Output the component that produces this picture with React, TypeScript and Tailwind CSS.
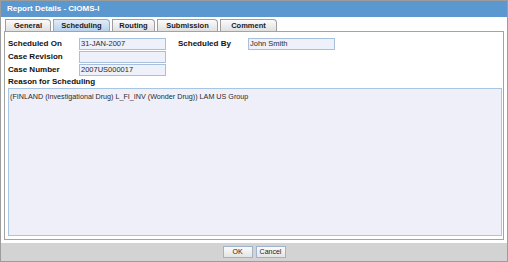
import React from 'react'

const tabs = [
  { title: 'General', w: 'w-[46px]' },
  { title: 'Scheduling', w: 'w-[57px]', active: true },
  { title: 'Routing', w: 'w-[43px]' },
  { title: 'Submission', w: 'w-[61px]' },
  { title: 'Comment', w: 'w-[57px]' },
]

const Field = ({ value = '' }: { value?: string }) => (
  <div className="w-[87px] h-[12px] bg-[#eef0fa] border border-[#a9c0dc] text-[7.5px] leading-[10px] pl-[1px] text-[#2a2a2a]">
    {value}
  </div>
)

const Label = ({ text, w }: { text: string; w: string }) => (
  <div className={`${w} text-[8px] font-bold text-[#111] leading-[12px]`}>{text}</div>
)

const App = () => {
  return (
    <div className="w-[508px] h-[262px] border border-[#9c9c9c] flex flex-col bg-white font-['Liberation_Sans',Arial,sans-serif]">
      <div className="h-[16px] bg-[#5c98d0] text-white font-bold text-[8px] pl-[6px] flex items-center">
        Report Details - CIOMS-I
      </div>

      <div className="flex-1 flex flex-col px-[3px] pt-[2px] pb-[3px]">
        <div className="h-[12px] flex gap-[2px] ml-[1px]">
          {tabs.map((tab) => (
            <div
              key={tab.title}
              className={`${tab.w} h-[12px] flex items-center justify-center border border-b-0 rounded-tr-[4px] text-[7.5px] font-bold text-[#1a1a1a] ${
                tab.active
                  ? 'bg-gradient-to-b from-[#e2ecf8] to-[#b9d1eb] border-[#8aabd0]'
                  : 'bg-gradient-to-b from-[#fbfbfb] to-[#e0e0e0] border-[#9e9e9e]'
              }`}
            >
              {tab.title}
            </div>
          ))}
        </div>

        <div className="flex-1 flex flex-col border border-[#a3a3a3] pt-[6px] pl-[3px] pr-[1px] pb-[3px]">
          <div className="flex flex-col gap-[1px]">
            <div className="flex items-center h-[12px]">
              <Label text="Scheduled On" w="w-[71px]" />
              <Field value="31-JAN-2007" />
              <div className="w-[12px]" />
              <Label text="Scheduled By" w="w-[70px]" />
              <Field value="John Smith" />
            </div>
            <div className="flex items-center h-[12px]">
              <Label text="Case Revision" w="w-[71px]" />
              <Field />
            </div>
            <div className="flex items-center h-[12px]">
              <Label text="Case Number" w="w-[71px]" />
              <Field value="2007US000017" />
            </div>
          </div>
          <div className="h-[12px] text-[8px] font-bold text-[#111] leading-[12px]">Reason for Scheduling</div>
          <div className="flex-1 bg-[#efeff9] border border-[#a8c5e3] text-[7.2px] text-[#2a2a2a] pl-[1px] pt-[3px] leading-[10px]">
            (FINLAND (Investigational Drug) L_FI_INV (Wonder Drug)) LAM US Group
          </div>
        </div>
      </div>

      <div className="h-[18px] bg-[#d3d3d3] flex items-center justify-center gap-[3px]">
        <button className="w-[30px] h-[12px] border border-[#9fb3cc] bg-gradient-to-b from-[#fbfbfb] to-[#e4e4e4] text-[7px] text-[#222] leading-[10px]">
          OK
        </button>
        <button className="w-[30px] h-[12px] border border-[#9fb3cc] bg-gradient-to-b from-[#fbfbfb] to-[#e4e4e4] text-[7px] text-[#222] leading-[10px]">
          Cancel
        </button>
      </div>
    </div>
  )
}

export default App
